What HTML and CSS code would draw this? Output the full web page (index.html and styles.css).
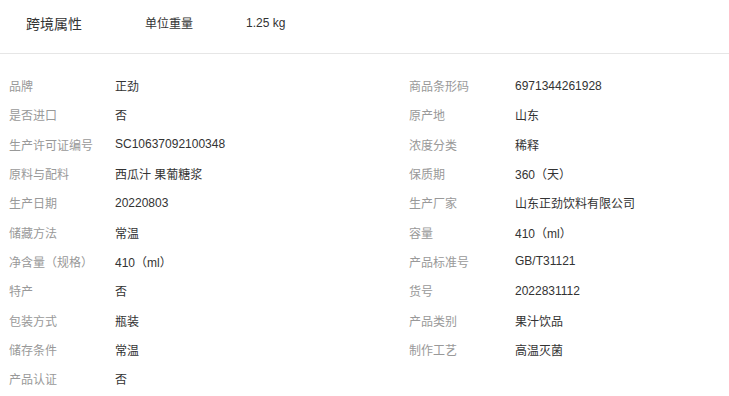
FILE: index.html
```html
<!DOCTYPE html>
<html lang="zh-CN">
<head>
<meta charset="utf-8">
<link rel="stylesheet" href="styles.css">
</head>
<body>
<div class="page">
  <div class="head">
    <span class="head-title">跨境属性</span>
    <span class="head-key">单位重量</span>
    <span class="head-val">1.25 kg</span>
  </div>
  <ul class="attrs">
    <li class="row"><span class="k">品牌</span><span class="v">正劲</span></li>
    <li class="row"><span class="k">商品条形码</span><span class="v">6971344261928</span></li>
    <li class="row"><span class="k">是否进口</span><span class="v">否</span></li>
    <li class="row"><span class="k">原产地</span><span class="v">山东</span></li>
    <li class="row"><span class="k">生产许可证编号</span><span class="v">SC10637092100348</span></li>
    <li class="row"><span class="k">浓度分类</span><span class="v">稀释</span></li>
    <li class="row"><span class="k">原料与配料</span><span class="v">西瓜汁 果葡糖浆</span></li>
    <li class="row"><span class="k">保质期</span><span class="v">360（天）</span></li>
    <li class="row"><span class="k">生产日期</span><span class="v">20220803</span></li>
    <li class="row"><span class="k">生产厂家</span><span class="v">山东正劲饮料有限公司</span></li>
    <li class="row"><span class="k">储藏方法</span><span class="v">常温</span></li>
    <li class="row"><span class="k">容量</span><span class="v">410（ml）</span></li>
    <li class="row"><span class="k">净含量（规格）</span><span class="v">410（ml）</span></li>
    <li class="row"><span class="k">产品标准号</span><span class="v">GB/T31121</span></li>
    <li class="row"><span class="k">特产</span><span class="v">否</span></li>
    <li class="row"><span class="k">货号</span><span class="v">2022831112</span></li>
    <li class="row"><span class="k">包装方式</span><span class="v">瓶装</span></li>
    <li class="row"><span class="k">产品类别</span><span class="v">果汁饮品</span></li>
    <li class="row"><span class="k">储存条件</span><span class="v">常温</span></li>
    <li class="row"><span class="k">制作工艺</span><span class="v">高温灭菌</span></li>
    <li class="row"><span class="k">产品认证</span><span class="v">否</span></li>
  </ul>
</div>
</body>
</html>
```
FILE: styles.css
```css
html, body {
  margin: 0;
  padding: 0;
  background: #fff;
  overflow: hidden;
}
body {
  font-family: "Liberation Sans", "Noto Sans CJK SC", sans-serif;
  color: #333;
}
.page {
  width: 729px;
}
.head {
  display: flex;
  align-items: center;
  border-bottom: 1px solid #e6e6e6;
  padding-left: 26px;
  padding-bottom: 8px;
  box-sizing: border-box;
  height: 54px;
}
.head-title {
  font-size: 14px;
  color: #333;
  width: 119px;
}
.head-key {
  font-size: 12px;
  color: #333;
  width: 101px;
}
.head-val {
  font-size: 12px;
  color: #333;
}
.attrs {
  list-style: none;
  margin: 0;
  padding: 17px 0 0 0;
  display: grid;
  grid-template-columns: 400px 329px;
  grid-auto-rows: 29.3px;
}
.row {
  display: flex;
  align-items: center;
  padding-left: 9px;
  font-size: 12px;
}
.k {
  width: 106px;
  color: #999;
  flex: none;
}
.v {
  color: #333;
}
```
